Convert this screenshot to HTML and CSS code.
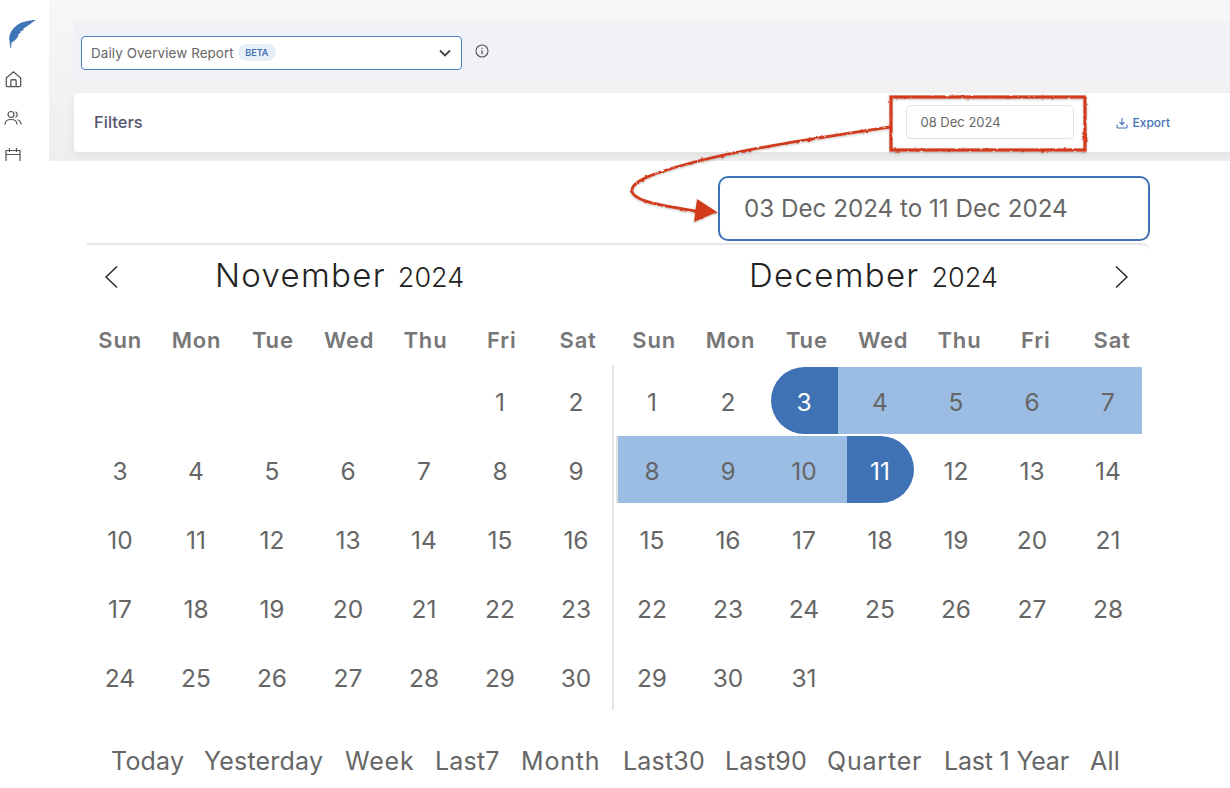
FILE: index.html
```html
<!DOCTYPE html>
<html lang="en">
<head>
<meta charset="utf-8">
<title>Daily Overview Report</title>
<link rel="stylesheet" href="styles.css">
</head>
<body>
<div class="page">
  <section class="report">
    <nav class="sidebar">
      <svg class="logo" viewBox="0 0 30 30" width="30" height="30"><path d="M29 1C21 1 13 3 8 8C3.500 12 1.500 17 2.500 22L3.500 29L4.200 29L4.500 23.500C7.500 22.500 10.500 19 11.500 16.500L11 15.500L13.500 14L13.500 12.500L16.500 11L16.500 9.500C20 7.500 25 3.500 29 1Z" fill="#3f74b8"/></svg>
      <svg class="nav-icon" viewBox="0 0 16 16" width="17" height="18"><path d="M1.200 7L8 1.300L14.800 7V14.200A1 1 0 0 1 13.800 15.200H2.200A1 1 0 0 1 1.200 14.200ZM5.500 15.200V9.700A1 1 0 0 1 6.500 8.700H9.500A1 1 0 0 1 10.500 9.700V15.200" fill="none" stroke="#555" stroke-width="1.200"/></svg>
      <svg class="nav-icon" viewBox="0 0 18 16" width="18" height="16"><circle cx="7" cy="4.500" r="3" fill="none" stroke="#555" stroke-width="1.200"/><path d="M1 14.500C1 11 3.500 9.500 7 9.500S13 11 13 14.500M11.500 1.800A3 3 0 0 1 11.500 7.200M13.500 9.800C15.800 10.500 17 12 17 14.500" fill="none" stroke="#555" stroke-width="1.200"/></svg>
      <svg class="nav-icon nav-cut" viewBox="0 0 16 16" width="16" height="16"><path d="M1 3.500H15V15H1ZM1 7.500H15M4.500 1V5M11.500 1V5" fill="none" stroke="#555" stroke-width="1.200"/></svg>
    </nav>
    <div class="report-main">
      <div class="toolbar">
        <div class="select">
          <span class="select-label">Daily Overview Report</span>
          <span class="badge">BETA</span>
          <svg class="chevron" viewBox="0 0 12 8" width="12" height="8"><path d="M1 1.500L6 6.500L11 1.500" fill="none" stroke="#444" stroke-width="1.800"/></svg>
        </div>
        <svg class="info" viewBox="0 0 14 14" width="14" height="14"><circle cx="7" cy="7" r="6" fill="none" stroke="#555" stroke-width="1.100"/><path d="M7 6.200V10.200M7 3.800V5" stroke="#555" stroke-width="1.200"/></svg>
      </div>
      <div class="filters">
        <span class="filters-title">Filters</span>
        <div class="date-input">08 Dec 2024</div>
        <div class="export">
          <svg viewBox="0 0 12 12" width="12" height="12"><path d="M6 1V7.500M3.500 5.200L6 7.700L8.500 5.200M1 7.500V10A1 1 0 0 0 2 11H10A1 1 0 0 0 11 10V7.500" fill="none" stroke="#3f72b5" stroke-width="1.100"/></svg>
          <span>Export</span>
        </div>
      </div>
    </div>
  </section>

  <section class="picker">
    <div class="range-row"><div class="range-input">03 Dec 2024 to 11 Dec 2024</div></div>
    <div class="calendar">
      <div class="cal-head">
        <svg class="arrow" viewBox="0 0 16 24" width="16" height="24"><path d="M14 1.500L3 12L14 22.500" fill="none" stroke="#222" stroke-width="1.400"/></svg>
        <div class="title title-nov"><span class="title-month">November</span><span class="title-year">2024</span></div>
        <div class="title title-dec"><span class="title-month">December</span><span class="title-year">2024</span></div>
        <svg class="arrow arrow-next" viewBox="0 0 16 24" width="16" height="24"><path d="M2 1.500L13 12L2 22.500" fill="none" stroke="#222" stroke-width="1.400"/></svg>
      </div>
      <div class="months">
        <div class="month">
          <div class="weekdays"><span>Sun</span><span>Mon</span><span>Tue</span><span>Wed</span><span>Thu</span><span>Fri</span><span>Sat</span></div>
          <div class="days">
            <span class="day"></span><span class="day"></span><span class="day"></span><span class="day"></span><span class="day"></span><span class="day"><b>1</b></span><span class="day"><b>2</b></span>
            <span class="day"><b>3</b></span><span class="day"><b>4</b></span><span class="day"><b>5</b></span><span class="day"><b>6</b></span><span class="day"><b>7</b></span><span class="day"><b>8</b></span><span class="day"><b>9</b></span>
            <span class="day"><b>10</b></span><span class="day"><b>11</b></span><span class="day"><b>12</b></span><span class="day"><b>13</b></span><span class="day"><b>14</b></span><span class="day"><b>15</b></span><span class="day"><b>16</b></span>
            <span class="day"><b>17</b></span><span class="day"><b>18</b></span><span class="day"><b>19</b></span><span class="day"><b>20</b></span><span class="day"><b>21</b></span><span class="day"><b>22</b></span><span class="day"><b>23</b></span>
            <span class="day"><b>24</b></span><span class="day"><b>25</b></span><span class="day"><b>26</b></span><span class="day"><b>27</b></span><span class="day"><b>28</b></span><span class="day"><b>29</b></span><span class="day"><b>30</b></span>
          </div>
        </div>
        <div class="month">
          <div class="weekdays weekdays-dec"><span>Sun</span><span>Mon</span><span>Tue</span><span>Wed</span><span>Thu</span><span>Fri</span><span>Sat</span></div>
          <div class="days days-split">
            <span class="day"><b>1</b></span><span class="day"><b>2</b></span><span class="day start"><b>3</b></span><span class="day mid first"><b>4</b></span><span class="day mid"><b>5</b></span><span class="day mid"><b>6</b></span><span class="day mid last"><b>7</b></span>
            <span class="day mid wk-start"><b>8</b></span><span class="day mid"><b>9</b></span><span class="day mid wk-end"><b>10</b></span><span class="day end"><b>11</b></span><span class="day"><b>12</b></span><span class="day"><b>13</b></span><span class="day"><b>14</b></span>
            <span class="day"><b>15</b></span><span class="day"><b>16</b></span><span class="day"><b>17</b></span><span class="day"><b>18</b></span><span class="day"><b>19</b></span><span class="day"><b>20</b></span><span class="day"><b>21</b></span>
            <span class="day"><b>22</b></span><span class="day"><b>23</b></span><span class="day"><b>24</b></span><span class="day"><b>25</b></span><span class="day"><b>26</b></span><span class="day"><b>27</b></span><span class="day"><b>28</b></span>
            <span class="day"><b>29</b></span><span class="day"><b>30</b></span><span class="day"><b>31</b></span><span class="day"></span><span class="day"></span><span class="day"></span><span class="day"></span>
          </div>
        </div>
      </div>
      <div class="presets"><span>Today</span><span>Yesterday</span><span class="preset-wide">Week</span><span>Last7</span><span class="preset-wide">Month</span><span>Last30</span><span>Last90</span><span class="preset-wide">Quarter</span><span class="preset-tight">Last 1 Year</span><span>All</span></div>
    </div>
  </section>

  <svg class="annotation" viewBox="0 0 1230 788" width="1230" height="788">
    <defs>
      <filter id="rough" x="-5%" y="-5%" width="110%" height="110%">
        <feTurbulence type="fractalNoise" baseFrequency="0.2" numOctaves="2" seed="3"/>
        <feDisplacementMap in="SourceGraphic" scale="2.500"/>
        <feGaussianBlur stdDeviation="0.4"/>
        <feDropShadow dx="0" dy="1" stdDeviation="1" flood-color="#000" flood-opacity="0.25"/>
      </filter>
    </defs>
    <g filter="url(#rough)">
      <rect x="891" y="97" width="194" height="53" fill="none" stroke="#d13a1c" stroke-width="3.200"/>
      <path d="M890 127C810 139 735 150 680 166C645 176 631 183 632 191C634 202 665 206 702 212" fill="none" stroke="#d13a1c" stroke-width="2.800"/>
      <path d="M697 199L717 212L694 222Z" fill="#d13a1c"/>
    </g>
  </svg>
</div>
</body>
</html>
```
FILE: styles.css
```css
* { box-sizing: border-box; }
html, body { margin: 0; padding: 0; background: #fff; }
.page {
  position: relative;
  width: 1230px;
  height: 788px;
  overflow: hidden;
  font-family: Inter, "Noto Sans", "Liberation Sans", sans-serif;
  color: #666;
}

.report { display: flex; height: 161px; }
.sidebar {
  width: 49px;
  flex: none;
  display: flex;
  flex-direction: column;
  padding: 19px 0 0 5px;
  overflow: hidden;
}
.logo { margin: 0 0 0 2px; flex: none; }
.nav-icon { flex: none; margin-bottom: 21px; }
.sidebar .nav-icon:nth-of-type(2) { margin-top: 21px; margin-bottom: 22px; }
.sidebar .nav-icon:nth-of-type(3) { margin-left: -1px; margin-bottom: 21px; }
.nav-cut { margin-top: 0; }

.report-main {
  flex: 1;
  background: linear-gradient(#f7f7f8, #eeeeef);
  padding: 22px 0 0 25px;
  display: flex;
  flex-direction: column;
}
.toolbar {
  height: 58px;
  background: #f0f2f7;
  display: flex;
  align-items: center;
  padding: 0 0 0 7px;
  flex: none;
}
.select {
  width: 381px;
  height: 34px;
  background: #fff;
  border: 1.500px solid #4a7fc1;
  border-radius: 4px;
  display: flex;
  align-items: center;
  padding: 0 10px 0 9px;
  margin-top: 3px;
}
.select-label { font-size: 13.400px; color: #666; letter-spacing: 0.1px; }
.badge {
  margin-left: 4px;
  height: 17px;
  width: 38px;
  border-radius: 9px;
  background: #e8eff8;
  color: #3f72b5;
  font-size: 9px;
  font-weight: 600;
  display: flex;
  align-items: center;
  justify-content: center;
}
.chevron { margin-left: auto; }
.info { margin: 0 0 0 13px; }
.filters {
  height: 59px;
  margin-top: 13px;
  background: #fff;
  border-radius: 4px 0 0 4px;
  box-shadow: 0 3px 8px rgba(0, 0, 0, 0.06);
  display: flex;
  align-items: center;
  padding: 0 60px 0 20px;
  flex: none;
}
.filters-title { font-size: 16.500px; font-weight: 500; color: #55566e; margin-bottom: 2px; }
.date-input {
  margin-left: auto;
  width: 168px;
  height: 34px;
  border: 1px solid #e0e0e4;
  border-radius: 5px;
  display: flex;
  align-items: center;
  padding-left: 13px;
  font-size: 13px;
  color: #666;
  margin-bottom: 1px;
}
.export {
  margin-left: 42px;
  display: flex;
  align-items: center;
  gap: 4px;
  color: #3f72b5;
  font-size: 12px;
  font-weight: 500;
}

.picker { padding: 15px 0 0 82px; }
.range-row { display: flex; justify-content: flex-end; padding-right: 80px; }
.range-input {
  width: 432px;
  height: 65px;
  border: 2px solid #3f72b5;
  border-radius: 10px;
  background: #fff;
  display: flex;
  align-items: center;
  padding-left: 24px;
  font-size: 24.200px;
  color: #666;
}
.calendar { margin-top: 2px; }
.cal-head {
  margin-left: 5px;
  width: 1063px;
  height: 62px;
  border-top: 2px solid #e6e6e6;
  border-radius: 0 8px 0 0;
  display: flex;
  align-items: center;
}
.arrow { flex: none; margin-left: 16px; margin-top: 3px; }
.title { display: flex; align-items: baseline; color: #222; white-space: nowrap; }
.title-nov { margin-left: 96px; width: 534px; }
.title-month { font-size: 33px; font-weight: 300; letter-spacing: 1.300px; }
.title-year { font-size: 27px; font-weight: 300; margin-left: 12px; }
.arrow-next { margin-left: auto; margin-right: 20px; }

.months { display: flex; }
.month { width: 532px; flex: none; }
.weekdays {
  display: grid;
  grid-template-columns: repeat(7, 76.330px);
  height: 60px;
  align-items: center;
  justify-items: center;
  font-size: 22px;
  font-weight: 600;
  letter-spacing: 0.800px;
  color: #777;
  padding-top: 10px;
}
.weekdays-dec { padding-left: 2px; }
.days {
  display: grid;
  grid-template-columns: repeat(7, 76px);
  grid-auto-rows: 69px;
  height: 345px;
}
.days-split { box-shadow: -2px 0 0 #e4e4e4; }
.day {
  position: relative;
  display: flex;
  align-items: center;
  justify-content: center;
  font-size: 24.500px;
  color: #666;
  padding-top: 5px;
}
.day b { position: relative; font-weight: 400; z-index: 1; }
.start b, .end b { color: #fff; }
.mid::before, .start::before, .end::before {
  content: "";
  position: absolute;
  top: 2px;
  bottom: 0;
  left: 0;
  right: 0;
  background: #9bbde3;
}
.start::before { left: 5px; right: 4px; background: #3f72b5; border-radius: 34px 0 0 34px; }
.first::before { left: -4px; }
.last::before { right: 4px; }
.wk-start::before { left: 4px; box-shadow: -2px 0 0 #e2e2e2; }
.wk-end::before { right: -5px; }
.end::before { left: 5px; right: 4px; background: #3f72b5; border-radius: 0 34px 34px 0; }

.presets {
  display: grid;
  grid-template-columns: 93px 141px 90px 86px 102px 102px 102px 117px 146px 40px;
  padding-left: 29px;
  margin-top: 36px;
  font-size: 25px;
  letter-spacing: 0.200px;
  color: #666;
  white-space: nowrap;
}
.preset-wide { letter-spacing: 0.800px; }
.preset-tight { letter-spacing: -0.200px; }

.annotation { position: absolute; left: 0; top: 0; pointer-events: none; }
```
